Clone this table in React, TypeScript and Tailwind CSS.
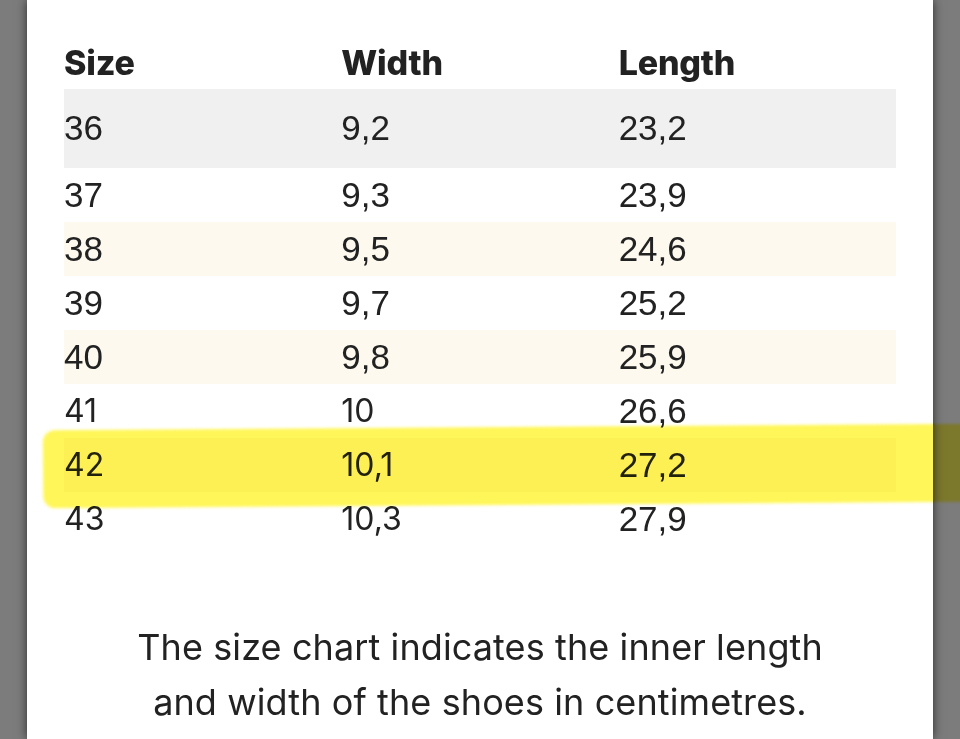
const rows = [
  { size: "36", width: "9,2", length: "23,2", bg: "bg-[#f0f0f0]", tall: true },
  { size: "37", width: "9,3", length: "23,9", bg: "bg-white" },
  { size: "38", width: "9,5", length: "24,6", bg: "bg-[#fdf9ef]" },
  { size: "39", width: "9,7", length: "25,2", bg: "bg-white" },
  { size: "40", width: "9,8", length: "25,9", bg: "bg-[#fdf9ef]" },
  { size: "41", width: "10", length: "26,6", bg: "bg-white", geo: true },
  { size: "42", width: "10,1", length: "27,2", bg: "bg-[#fdf9ef]", geo: true },
  { size: "43", width: "10,3", length: "27,9", bg: "bg-white", geo: true },
];

const arial = "font-['Liberation_Sans',Arial,sans-serif]";
const geo = "font-['Inter','Noto_Sans',sans-serif]";

export default function App() {
  return (
    <div className="relative h-[739px] w-[960px] overflow-hidden bg-[#7c7c7c]">
      <div className="ml-[27px] h-full w-[906px] bg-white pt-[36px] px-[37px] text-[#222] shadow-[0_0_10px_rgba(0,0,0,0.65)]">
        <div className={`grid h-[53px] grid-cols-3 items-center text-[34px] font-extrabold tracking-[-0.2px] ${geo}`}>
          <div>Size</div>
          <div>Width</div>
          <div>Length</div>
        </div>
        {rows.map((r) => (
          <div
            key={r.size}
            className={`grid grid-cols-3 items-center text-[35px] ${r.bg} ${r.tall ? "h-[79px]" : "h-[54px]"}`}
          >
            <div className={r.geo ? `${geo} text-[32px]` : arial}>{r.size}</div>
            <div className={r.geo ? `${geo} text-[32px]` : arial}>{r.width}</div>
            <div className={arial}>{r.length}</div>
          </div>
        ))}
        <p className={`mt-[74px] text-center text-[36px] leading-[55px] tracking-[0.1px] ${geo}`}>
          The size chart indicates the inner length
          <br />
          and width of the shoes in centimetres.
        </p>
      </div>
      {/* highlighter stroke */}
      <div className="pointer-events-none absolute left-[43px] top-[427px] h-[78px] w-[930px] -rotate-[0.4deg] rounded-l-[12px] bg-[#fff650] opacity-95 mix-blend-multiply blur-[1.5px]" />
    </div>
  );
}
